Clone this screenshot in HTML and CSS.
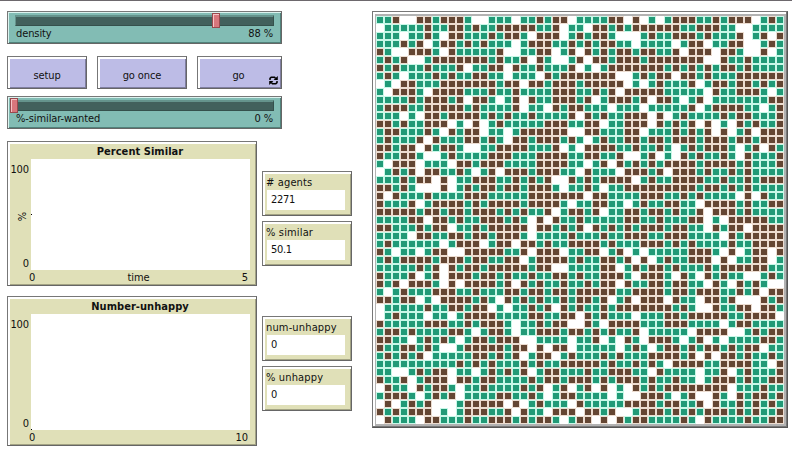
FILE: index.html
```html
<!DOCTYPE html>
<html lang="en">
<head>
<meta charset="utf-8">
<title>Segregation</title>
<link rel="stylesheet" href="styles.css">
</head>
<body>
<main class="model">
  <section class="controls">
    <div class="widget slider">
      <div class="track"><i class="handle handle-density"></i></div>
      <div class="slider-row"><span>density</span><span>88 %</span></div>
    </div>
    <div class="buttons">
      <button class="widget button">setup</button>
      <button class="widget button wide">go once</button>
      <button class="widget button last">go
        <svg class="forever" viewBox="0 0 9 9" width="9" height="9"><path d="M1 4V2.4L2.2 1.2H5.6L6.6 2.4M8 5V6.6L6.8 7.8H3.4L2.4 6.6" fill="none" stroke="#000" stroke-width="1.5"/><path d="M4.6 4H8.8V0zM4.4 5H0.2V9z"/></svg>
      </button>
    </div>
    <div class="widget slider second">
      <div class="track"><i class="handle handle-zero"></i></div>
      <div class="slider-row"><span class="loose">%-similar-wanted</span><span>0 %</span></div>
    </div>
    <div class="outputs">
      <div class="widget plot">
        <h2>Percent Similar</h2>
        <div class="plot-body">
          <div class="y-axis"><span>100</span><span class="y-label">%</span><span>0</span></div>
          <div class="canvas"><i class="dot dot-middle"></i></div>
        </div>
        <div class="x-axis"><span>0</span><span>time</span><span>5</span></div>
      </div>
      <div class="monitors">
        <div class="widget monitor"><span>#&nbsp;agents</span><output>2271</output></div>
        <div class="widget monitor"><span>% similar</span><output>50.1</output></div>
      </div>
    </div>
    <div class="outputs lower">
      <div class="widget plot tall">
        <h2>Number-unhappy</h2>
        <div class="plot-body">
          <div class="y-axis"><span>100</span><span>0</span></div>
          <div class="canvas"><i class="dot dot-bottom"></i></div>
        </div>
        <div class="x-axis"><span>0</span><span>10</span></div>
      </div>
      <div class="monitors">
        <div class="widget monitor"><span>num-unhappy</span><output>0</output></div>
        <div class="widget monitor"><span>% unhappy</span><output>0</output></div>
      </div>
    </div>
  </section>
  <section class="world" id="world"></section>
</main>
<script src="world.js"></script>
</body>
</html>
```
FILE: styles.css
```css
* { box-sizing: border-box; }
body {
  margin: 0;
  height: 453px;
  overflow: hidden;
  background: #fff;
  border-top: 1px solid #6d686d;
  font: 11px/13px "DejaVu Sans Condensed", "DejaVu Sans", sans-serif;
  font-stretch: condensed;
  letter-spacing: -0.1px;
  color: #111;
}
.model { display: flex; padding: 10px 0 0 7px; }
.controls { width: 365px; }
.widget {
  border: 1px solid #777;
  border-right-color: #666;
  border-bottom-color: #666;
}
.slider {
  width: 275px;
  height: 33px;
  padding: 3px 7px 0;
  background: #82bcb4;
  box-shadow: inset 1px 1px #dcf3ef, inset -1px -1px #51827b;
}
.second { margin-top: 7px; }
.track {
  position: relative;
  height: 11px;
  width: 259px;
  background: #42605c;
  border: 1px solid #35504c;
  border-top: 2px solid #65938c;
  border-left-color: #65938c;
}
.handle {
  position: absolute;
  top: -4px;
  width: 8px;
  height: 15px;
  background: #d8767c;
  border: 1px solid #99494e;
  box-shadow: inset 1px 1px #f6c4c6;
}
.handle-density { left: 196px; }
.handle-zero { left: -6px; }
.slider-row { display: flex; justify-content: space-between; padding: 1px 1px 0 1px; }
.buttons { display: flex; gap: 10px; margin-top: 12px; }
.button {
  position: relative;
  width: 80px;
  height: 33px;
  padding: 5px 0 0;
  border-radius: 0;
  background: #bdbce6;
  box-shadow: inset 2px 2px #fff, inset -1px -1px #7f7ea0;
  font: inherit;
  letter-spacing: inherit;
  color: #111;
}
.wide { width: 90px; }
.last { width: 85px; padding-right: 2px; }
.forever { position: absolute; right: 3px; bottom: 3px; }
.outputs { display: flex; gap: 5px; margin-top: 12px; }
.lower { margin-top: 10px; }
.plot {
  width: 250px;
  height: 145px;
  padding: 2px 6px 0 1px;
  background: #e0e0b8;
  box-shadow: inset 2px 2px #fff, inset -1px -1px #a3a384;
}
.tall { height: 150px; }
.plot h2 {
  margin: 0;
  padding-left: 21px;
  height: 15px;
  text-align: center;
  font: bold 11px/15px "DejaVu Sans Condensed", "DejaVu Sans", sans-serif;
  font-stretch: condensed;
  letter-spacing: 0.05px;
}
.plot-body { display: flex; height: 111px; }
.tall .plot-body { height: 116px; }
.y-axis {
  width: 22px;
  display: flex;
  flex-direction: column;
  justify-content: space-between;
  align-items: flex-end;
  padding: 4px 2px 0 0;
}
.y-label { transform: rotate(-90deg); margin-right: 2px; }
.canvas { position: relative; flex: 1; background: #fff; }
.dot { position: absolute; left: 0; width: 1px; height: 1px; background: #000; }
.dot-middle { top: 55px; }
.dot-bottom { bottom: 0; }
.x-axis { display: flex; justify-content: space-between; padding: 1px 2px 0 20px; }
.monitors { display: flex; flex-direction: column; gap: 5px; padding-top: 30px; }
.lower .monitors { padding-top: 20px; }
.monitor {
  width: 90px;
  height: 45px;
  padding: 4px 6px 0 3px;
  background: #e0e0b8;
  box-shadow: inset 2px 2px #fff, inset -1px -1px #a3a384;
}
.monitor span { display: block; height: 14px; white-space: nowrap; letter-spacing: 0.15px; }
.monitor output {
  display: block;
  height: 20px;
  margin-left: 1px;
  padding-left: 4px;
  background: #fff;
  line-height: 20px;
  letter-spacing: -0.3px;
}
.world {
  width: 416px;
  height: 417px;
  border: 1px solid #777;
  border-right-color: #555;
  border-bottom-color: #555;
  box-shadow: inset -1px -1px #777;
  padding: 2px 1px 1px 2px;
}
.patches {
  display: grid;
  width: 411px;
  height: 412px;
  grid-template-columns: repeat(51, 8px);
  grid-auto-rows: 8px;
  border-style: solid;
  border-color: #b2b2b2;
  border-width: 2px 2px 2px 1px;
}
.green { background: #219a77; border: 1px solid #c8f8e8; }
.brown { background: #644633; border: 1px solid #ecdcd0; }
```
FILE: world.js
```javascript
// One string per row of patches: G = green agent, B = brown agent, . = empty.
const rows = [
  "GGB..BBGBBBG..GGG .GGBGBB.GGGGBB.B. G.GBBBGGBGBBB.GBG",
  ".GGGGGBGGBBGBGGBB BBBGGB.GG.BBGBGBB BBBBGGBBBGG..GGGG",
  "GGG.GGBG.BBGGGBGB BG.BBB.GBGBBG...G BGGBBBGBGGGB.GB.B",
  "GGGBGB.GBBGBGBGGG .GBBBGGBGBGBBGG.G GGG.GBB.GGBB..GBG",
  "BG..BBBG.BGGGGGB. .GGBB.GB.BGBGBBGB BGGB.BBB.BBG..B.G",
  "GBGB..GBBBBBBBGBG GB.BG..GB.BBGBBBG BBBBBBB..BGGBGGGG",
  "BGBGGGBGGGB.GGBB. BGGBGGGB.G.GBBBBB BBGBGBGBGBBGBGGGG",
  "GBG.GGGBGBGGBBGG. GGG.BGBBBBBBB..GB GBB.BBGBGGGBBBBBB",
  ".G.BBGGGBBBBBBBGB B.BBGBBBGBBBBB.G. GBGGGB.GBBGBBGBGB",
  "G.BBBG.BBBBGGGBGG BGGGGBBBGGBGB.BBB BBGGGGG.BGGBBBG.G",
  "GGGGBGBBBGB.BBG.G B.BGGBBBGB.GBBBGB .BBG.GB.GGGGGGGBB",
  "GBBBGGBBBBBGBGGGG B.GG.BGBBGGG.GGG. GGGGGB.GBBBBGG.GB",
  "GGG.G.BBGBBBBGBGB GGBGGGGB.BGBGGBBB .B.GBGGGGBGBBGGGB",
  "BBGBGGBBB.G.B.GBG GGGGBBBGGBB.GGBBB .BGBGB.B.G.BGBGGB",
  "GBBGGGBG.BGBB.GG. GBBBBBB..BBGGGBB. GGGBGBGB.B.GB.BBB",
  "GBGGGB.BGGGBBGBG. BBGBBBGBG.GBGGBBG BBGBBBGBBBGBBGBBB",
  "BBGBB.BGBBG..GGBB BBGGGB.G.BBBBGGBG GBG.GBGBBBG.GB.BG",
  "BGGBBG..GBGGGGBBB GGGBBBBGGBBGGB..G B.G.BGBGGBG.BGGGB",
  "G.BBB.GGG.BBGBBBG GGGBBBBGG.GB.BGBG BGBBBBGBBBBGBGGGB",
  ".GBGB.BBGGBG.GB.B BBGBBBGG.BGGG.BBB GB.BBBGBGGBGBGGGG",
  "GGGBGBB.B.GGBBBGG BGBGB..BGBGBBBB.G BGGBBBBGGBGGBGBBB",
  "BBGBG...B.GBGBBGB BGBBBG.GGBG.GGBBB BBBBBBGBBGBGBGGGG",
  "B.BGGGBGGGGBBBGGG GGBBBBBBB.BBGGGGB BBGGBGBGGGG.B.BGG",
  "BGGGB.GBBBBGBGBBB BGBBBBG.GGBBGG.GB GGBBGG.BBBBGBGGBB",
  "BBBBBGBBGBBGBBBGB GBGGB.GBBGB.GGBBG BBGBGGB.BBBGBGGGG",
  "GGGGBB.BBGBGGBBBG BG.B.BGGBGGGGGBBG GBGGGBB.G.BBBBBGG",
  "BBGGGBGBB.GGBGBBB BB.BBGBGB.BGBGBGB BBGBBGG.BGBB.BBBB",
  "GGGG.BBGGBBGBBGBB BG.GGGGBGGGBGGBBB GGBBBGGGG.BGBBBBB",
  "GBGGGGGG.GBBB.GBB .BBGBGGBBBBGBGGGB BBGBGBGGGGBGGBBBB",
  "BG.GG.GBB..BBBBBG GB.BBB.GGBB.GB.G. GGGGGBBBG.B.GBB.B",
  "GBGBBBBGBBBGBBGGB B.GBBBBGBGGBBGB.B .GBGGBBB.B.GGBB.G",
  "GGGGGBGB.BGBBGBBB BBGBB..GGGGBB.GBG BBGBGGGBGBBBBBBGG",
  "BGGGB.GB.BBBGBBGB GGBGGBBGBGGBBBG.B BBG.BG.BGBGG..GBG",
  "BGB.BBBG.B.BBBBGB .BGBGGBGGBGBB.BGG BBGBBGG.BG.BGBG..",
  "G.GBGGGBBBGGBGGGB BGBBGBBGBBBBBGGBB BBGBBGBBBGGBGB.BB",
  "BBGBB.G.BBBBGBG.B GBGBGGBGBBGB.GB.B BB.BGG.BBGB...BGB",
  ".GGGGGBGGBBGBB.G. GGBGB.BGBGGBGBBBB BBBGBG..BGGBB.BBG",
  ".GBGGG.GG.GBBBBGG GGBBGGBB.BGBGGG.G GGBBGBBBBBGGBBBB.",
  "BGGGGGBBBGGBGBBBG .GGBGBB..BG.BBBBG GGBBBGGGG.GBBGGGG",
  "GBBGBGGGGBBG.GBBG .GGBBBGBBGBGBGGB. GGGGG.BBBB..GBGBB",
  "BBGG.GBGBG.GBBGBB B..GGGG.GGB.G.BG. BBBG.GB.G.GGGGBBG",
  "BGGBBGBG..GBBBBBG BB.B.BB.GGGGG.GBG .GBBGBGBBGBGBB.GG",
  "GBGBGB.GGGGGBBGBG B.GBB.GBGGGBGBGGG BBBBGB.B.BBGBGGBG",
  "GGGGGGGGGGBGBGBGG GBGBGGBBBBBGBGGBG BG.BBBBGGBBBBGG.B",
  "GG..GBGBB.GG.GBGB GB.GBBGGGBGGBBBGG .BGGGG.GGB.GBGGGB",
  "BGGB.GBBB.BBGBBGG GGBGBBGBBBGBGBBBG BGGBGG.GBBBGBGGBB",
  ".BGG.BGBBG.GGBGGG GBGB.GB.GB.B.G.BG BGBBBBBBBB.GGGBGG",
  "GBBBG.GBGB.GGGGBB GGBG.GBBGGGG.G..B BBG.GB..BG.BGBBGB",
  ".B.GBGB...GBBBBB. B.GBGGG.BGGGGGBBB BGBBGGB.BGGBGBGBG",
  "BGBGBBB.G.GBBBGGB .BGG.BBB.BBGB..GB BBGBGBGBBBGBGBGGB",
  ".BGGG.BBGGGBGGBBB GBGBBG.GBB.B.BGBB GGGGBG.BGGGGBGGBB"
];
const kinds = { G: "green", B: "brown", ".": "" };
const patches = document.createElement("div");
patches.className = "patches";
for (const row of rows) {
  // Every row is exactly 51 patches wide.
  for (const patch of row.replace(/ /g, "").padEnd(51, ".").slice(0, 51)) {
    const cell = document.createElement("i");
    cell.className = kinds[patch];
    patches.append(cell);
  }
}
document.getElementById("world").append(patches);
```
